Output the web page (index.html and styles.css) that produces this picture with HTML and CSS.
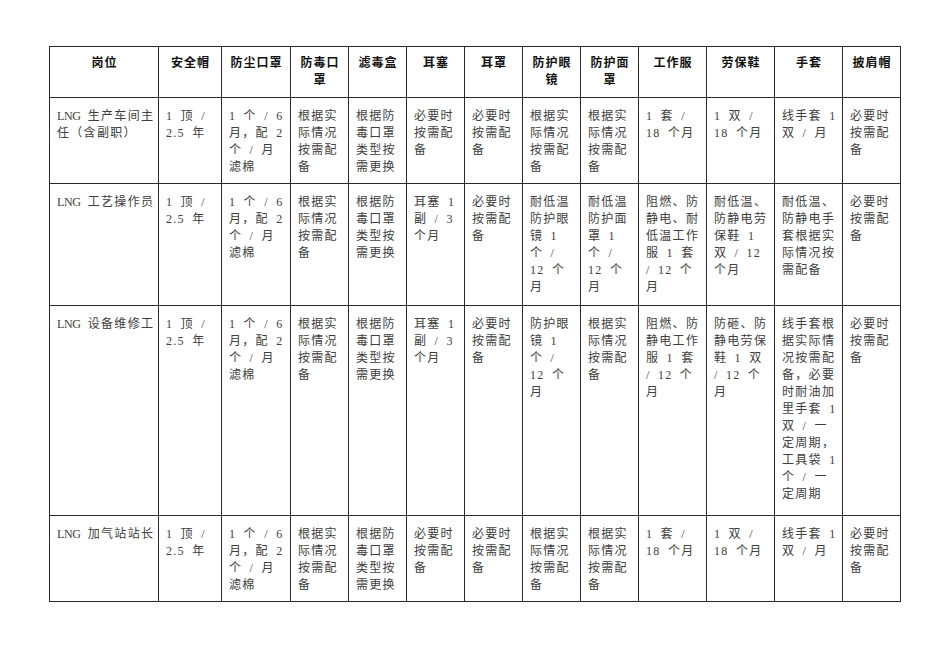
FILE: index.html
```html
<!DOCTYPE html>
<html lang="zh-CN">
<head>
<meta charset="utf-8">
<title>劳动防护用品配备标准</title>
<link rel="stylesheet" href="styles.css">
</head>
<body>
<table class="ppe">
  <colgroup>
    <col class="c-post">
    <col class="c-63">
    <col class="c-69">
    <col class="c-58">
    <col class="c-58">
    <col class="c-58">
    <col class="c-58">
    <col class="c-58">
    <col class="c-58">
    <col class="c-68">
    <col class="c-68">
    <col class="c-68">
    <col class="c-58">
  </colgroup>
  <thead>
    <tr class="r-head">
      <th>岗位</th>
      <th>安全帽</th>
      <th>防尘口罩</th>
      <th>防毒口<br>罩</th>
      <th>滤毒盒</th>
      <th>耳塞</th>
      <th>耳罩</th>
      <th>防护眼<br>镜</th>
      <th>防护面<br>罩</th>
      <th>工作服</th>
      <th>劳保鞋</th>
      <th>手套</th>
      <th>披肩帽</th>
    </tr>
  </thead>
  <tbody>
    <tr class="r-1">
      <td><span class="en">LNG</span> 生产车间主<br>任（含副职）</td>
      <td>1 顶 /<br>2.5 年</td>
      <td>1 个 / 6<br>月，配 2<br>个 / 月<br>滤棉</td>
      <td>根据实<br>际情况<br>按需配<br>备</td>
      <td>根据防<br>毒口罩<br>类型按<br>需更换</td>
      <td>必要时<br>按需配<br>备</td>
      <td>必要时<br>按需配<br>备</td>
      <td>根据实<br>际情况<br>按需配<br>备</td>
      <td>根据实<br>际情况<br>按需配<br>备</td>
      <td>1 套 /<br>18 个月</td>
      <td>1 双 /<br>18 个月</td>
      <td>线手套 1<br>双 / 月</td>
      <td>必要时<br>按需配<br>备</td>
    </tr>
    <tr class="r-2">
      <td><span class="en">LNG</span> 工艺操作员</td>
      <td>1 顶 /<br>2.5 年</td>
      <td>1 个 / 6<br>月，配 2<br>个 / 月<br>滤棉</td>
      <td>根据实<br>际情况<br>按需配<br>备</td>
      <td>根据防<br>毒口罩<br>类型按<br>需更换</td>
      <td>耳塞 1<br>副 / 3<br>个月</td>
      <td>必要时<br>按需配<br>备</td>
      <td>耐低温<br>防护眼<br>镜 1<br>个 /<br>12 个<br>月</td>
      <td>耐低温<br>防护面<br>罩 1<br>个 /<br>12 个<br>月</td>
      <td>阻燃、防<br>静电、耐<br>低温工作<br>服 1 套<br>/ 12 个<br>月</td>
      <td>耐低温、<br>防静电劳<br>保鞋 1<br>双 / 12<br>个月</td>
      <td>耐低温、<br>防静电手<br>套根据实<br>际情况按<br>需配备</td>
      <td>必要时<br>按需配<br>备</td>
    </tr>
    <tr class="r-3">
      <td><span class="en">LNG</span> 设备维修工</td>
      <td>1 顶 /<br>2.5 年</td>
      <td>1 个 / 6<br>月，配 2<br>个 / 月<br>滤棉</td>
      <td>根据实<br>际情况<br>按需配<br>备</td>
      <td>根据防<br>毒口罩<br>类型按<br>需更换</td>
      <td>耳塞 1<br>副 / 3<br>个月</td>
      <td>必要时<br>按需配<br>备</td>
      <td>防护眼<br>镜 1<br>个 /<br>12 个<br>月</td>
      <td>根据实<br>际情况<br>按需配<br>备</td>
      <td>阻燃、防<br>静电工作<br>服 1 套<br>/ 12 个<br>月</td>
      <td>防砸、防<br>静电劳保<br>鞋 1 双<br>/ 12 个<br>月</td>
      <td>线手套根<br>据实际情<br>况按需配<br>备，必要<br>时耐油加<br>里手套 1<br>双 / 一<br>定周期，<br>工具袋 1<br>个 / 一<br>定周期</td>
      <td>必要时<br>按需配<br>备</td>
    </tr>
    <tr class="r-4">
      <td><span class="en">LNG</span> 加气站站长</td>
      <td>1 顶 /<br>2.5 年</td>
      <td>1 个 / 6<br>月，配 2<br>个 / 月<br>滤棉</td>
      <td>根据实<br>际情况<br>按需配<br>备</td>
      <td>根据防<br>毒口罩<br>类型按<br>需更换</td>
      <td>必要时<br>按需配<br>备</td>
      <td>必要时<br>按需配<br>备</td>
      <td>根据实<br>际情况<br>按需配<br>备</td>
      <td>根据实<br>际情况<br>按需配<br>备</td>
      <td>1 套 /<br>18 个月</td>
      <td>1 双 /<br>18 个月</td>
      <td>线手套 1<br>双 / 月</td>
      <td>必要时<br>按需配<br>备</td>
    </tr>
  </tbody>
</table>
</body>
</html>
```
FILE: styles.css
```css
html, body {
  margin: 0;
  padding: 0;
  background: #ffffff;
}

body {
  font-family: "Liberation Serif", "Noto Sans CJK SC", serif;
  font-size: 12px;
  color: #404040;
}

.ppe {
  border-collapse: collapse;
  table-layout: fixed;
  width: 852px;
  margin: 46px 0 0 49px;
}

.c-post { width: 109px; }
.c-63 { width: 63px; }
.c-69 { width: 69px; }
.c-58 { width: 58px; }
.c-68 { width: 68px; }

.ppe th,
.ppe td {
  border: 1px solid #2a2a2a;
  vertical-align: top;
  white-space: nowrap;
  line-height: 17px;
  overflow: hidden;
}

.ppe th {
  font-weight: bold;
  color: #111111;
  text-align: center;
  letter-spacing: 1px;
  padding: 8px 0 0 1px;
}

.ppe td {
  text-align: left;
  letter-spacing: 1.3px;
  word-spacing: 3px;
  padding: 10px 2px 0 7px;
}

.en {
  letter-spacing: -0.4px;
}

.r-head { height: 51px; }
.r-1 { height: 86px; }
.r-2 { height: 122px; }
.r-3 { height: 210px; }
.r-4 { height: 86px; }
```
